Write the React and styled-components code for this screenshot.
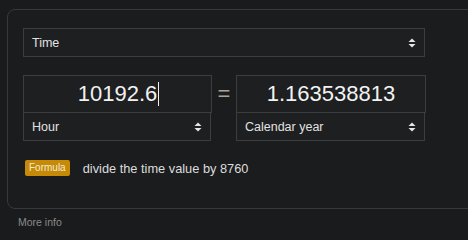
import React from "react";
import styled, { createGlobalStyle } from "styled-components";

const Global = createGlobalStyle`
  html, body { margin: 0; padding: 0; background: #1a1b1d; overflow: hidden; }
  body { font-family: "Liberation Sans", Arial, sans-serif; }
  #root { width: 468px; height: 240px; overflow: hidden; }
`;

const Page = styled.div`
  padding: 9px 0 0 7px;
  width: 468px;
  height: 240px;
  box-sizing: border-box;
`;

const Card = styled.div`
  box-sizing: border-box;
  width: 500px;
  height: 200px;
  border: 1px solid #38393b;
  border-radius: 8px;
  background: #1b1c1e;
  padding: 18px 15px 0 15px;
  display: flex;
  flex-direction: column;
`;

const SelectBox = styled.div`
  box-sizing: border-box;
  width: ${(p) => p.$w};
  height: ${(p) => p.$h || "29px"};
  border: 1px solid #3c3d3f;
  ${(p) => (p.$noTop ? "border-top: none;" : "")}
  background: #1d1f21;
  display: flex;
  align-items: center;
  justify-content: space-between;
  padding: 0 8px 0 8px;
  color: #e2e2e2;
  font-size: 12.5px;
`;

const Arrows = () => (
  <svg width="8" height="10" viewBox="0 0 8 10">
    <polygon points="0.5,4 4,0.5 7.5,4" fill="#e6e6e6" />
    <polygon points="0.5,6 4,9.5 7.5,6" fill="#e6e6e6" />
  </svg>
);

const Select = ({ label, w, noTop, h }) => (
  <SelectBox $w={w} $noTop={noTop} $h={h}>
    <span>{label}</span>
    <Arrows />
  </SelectBox>
);

const ConvRow = styled.div`
  margin-top: 18px;
  display: grid;
  grid-template-columns: 189px 24px 190px;
  align-items: start;
`;

const Column = styled.div`
  display: flex;
  flex-direction: column;
`;

const NumberBox = styled.div`
  box-sizing: border-box;
  height: 38px;
  border: 1px solid #3c3d3f;
  background: #1d1f21;
  display: flex;
  align-items: center;
  justify-content: center;
  color: #f2f2f2;
  font-size: 22px;
`;

const Caret = styled.span`
  display: inline-block;
  width: 1px;
  height: 24px;
  background: #f0f0f0;
  margin-left: 1px;
  margin-right: -2px;
`;

const Equals = styled.div`
  height: 38px;
  display: flex;
  align-items: center;
  justify-content: center;
  color: #aaa498;
  font-size: 22px;
`;

const FormulaRow = styled.div`
  margin-top: 19px;
  margin-left: 2px;
  display: flex;
  align-items: center;
`;

const Badge = styled.span`
  box-sizing: border-box;
  height: 16px;
  padding: 0 4px;
  background: #c68a06;
  border-radius: 2px;
  color: #f3ead8;
  font-size: 10px;
  line-height: 16px;
`;

const FormulaText = styled.span`
  margin-left: 13px;
  color: #dcdcdc;
  font-size: 12.8px;
`;

const MoreInfo = styled.div`
  margin: 7px 0 0 11px;
  color: #8a8a8a;
  font-size: 10.5px;
  line-height: 12px;
`;

export default function App() {
  return (
    <>
      <Global />
      <Page>
        <Card>
          <Select label="Time" w="402px" />
          <ConvRow>
            <Column>
              <NumberBox>
                <span>10192.6</span>
                <Caret />
              </NumberBox>
              <Select label="Hour" w="188px" noTop h="28px" />
            </Column>
            <Equals>=</Equals>
            <Column>
              <NumberBox>1.163538813</NumberBox>
              <Select label="Calendar year" w="189px" noTop h="28px" />
            </Column>
          </ConvRow>
          <FormulaRow>
            <Badge>Formula</Badge>
            <FormulaText>divide the time value by 8760</FormulaText>
          </FormulaRow>
        </Card>
        <MoreInfo>More info</MoreInfo>
      </Page>
    </>
  );
}
